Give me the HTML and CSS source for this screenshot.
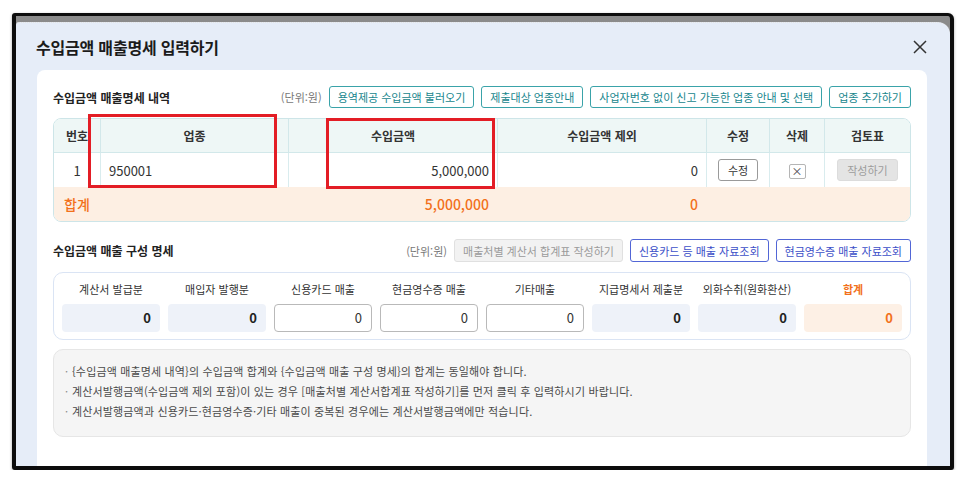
FILE: index.html
```html
<!DOCTYPE html>
<html lang="ko">
<head>
<meta charset="utf-8">
<title>수입금액 매출명세 입력하기</title>
<link rel="stylesheet" href="styles.css">
</head>
<body>
<div class="frame">
  <div class="modal">
    <header class="modal-head">
      <h1 class="modal-title">수입금액 매출명세 입력하기</h1>
      <button class="close" type="button" aria-label="닫기">
        <svg width="14" height="14" viewBox="0 0 14 14"><path d="M1 1L13 13M13 1L1 13" stroke="#333" stroke-width="1.5" fill="none"/></svg>
      </button>
    </header>

    <div class="panel">
      <section class="sec">
        <div class="sec-head">
          <h2 class="sec-title">수입금액 매출명세 내역</h2>
          <div class="tools">
            <span class="unit">(단위:원)</span>
            <button class="btn btn-teal" type="button">용역제공 수입금액 불러오기</button>
            <button class="btn btn-teal" type="button">제출대상 업종안내</button>
            <button class="btn btn-teal" type="button">사업자번호 없이 신고 가능한 업종 안내 및 선택</button>
            <button class="btn btn-teal" type="button">업종 추가하기</button>
          </div>
        </div>

        <div class="table-wrap">
          <table class="grid">
            <colgroup>
              <col class="c-no"><col class="c-type"><col class="c-amt"><col class="c-ex"><col class="c-edit"><col class="c-del"><col class="c-rev">
            </colgroup>
            <thead>
              <tr><th>번호</th><th>업종</th><th>수입금액</th><th>수입금액 제외</th><th>수정</th><th>삭제</th><th>검토표</th></tr>
            </thead>
            <tbody>
              <tr class="row">
                <td class="ctr">1</td>
                <td class="lft">950001</td>
                <td class="num">5,000,000</td>
                <td class="num">0</td>
                <td class="ctr"><button class="mini" type="button">수정</button></td>
                <td class="ctr"><button class="del" type="button">×</button></td>
                <td class="ctr"><button class="mini mini-off" type="button">작성하기</button></td>
              </tr>
              <tr class="sum">
                <td colspan="2" class="lft sum-label">합계</td>
                <td class="num">5,000,000</td>
                <td class="num">0</td>
                <td colspan="3"></td>
              </tr>
            </tbody>
          </table>
          <div class="mark mark-type"></div>
          <div class="mark mark-amt"></div>
        </div>
      </section>

      <section class="sec sec-2">
        <div class="sec-head">
          <h2 class="sec-title">수입금액 매출 구성 명세</h2>
          <div class="tools">
            <span class="unit">(단위:원)</span>
            <button class="btn btn-gray" type="button">매출처별 계산서 합계표 작성하기</button>
            <button class="btn btn-blue" type="button">신용카드 등 매출 자료조회</button>
            <button class="btn btn-blue" type="button">현금영수증 매출 자료조회</button>
          </div>
        </div>

        <div class="mix">
          <div class="cell"><span class="cell-label">계산서 발급분</span><span class="field field-ro">0</span></div>
          <div class="cell"><span class="cell-label">매입자 발행분</span><span class="field field-ro">0</span></div>
          <div class="cell"><span class="cell-label">신용카드 매출</span><span class="field field-in">0</span></div>
          <div class="cell"><span class="cell-label">현금영수증 매출</span><span class="field field-in">0</span></div>
          <div class="cell"><span class="cell-label">기타매출</span><span class="field field-in">0</span></div>
          <div class="cell"><span class="cell-label">지급명세서 제출분</span><span class="field field-ro">0</span></div>
          <div class="cell"><span class="cell-label">외화수취(원화환산)</span><span class="field field-ro">0</span></div>
          <div class="cell"><span class="cell-label cell-label-sum">합계</span><span class="field field-sum">0</span></div>
        </div>

        <ul class="notes">
          <li>{수입금액 매출명세 내역}의 수입금액 합계와 {수입금액 매출 구성 명세}의 합계는 동일해야 합니다.</li>
          <li>계산서발행금액(수입금액 제외 포함)이 있는 경우 [매출처별 계산서합계표 작성하기]를 먼저 클릭 후 입력하시기 바랍니다.</li>
          <li>계산서발행금액과 신용카드·현금영수증·기타 매출이 중복된 경우에는 계산서발행금액에만 적습니다.</li>
        </ul>
      </section>
    </div>
  </div>
</div>
</body>
</html>
```

FILE: styles.css
```css
* { box-sizing: border-box; }

html, body {
  margin: 0;
  background: #ffffff;
}

body {
  font-family: "Noto Sans CJK KR", "Noto Sans", sans-serif;
  color: #222;
}

button {
  font-family: inherit;
  cursor: pointer;
}

/* outer window frame */
.frame {
  margin: 13px 0 0 12px;
  width: 942px;
  height: 457px;
  border: 4px solid #0d0d0d;
  border-top-width: 3px;
  background: #8b8b8b;
  border-radius: 3px 6px 3px 3px;
  box-shadow: 0 1px 3px rgba(0, 0, 0, 0.35);
  overflow: hidden;
}

.modal {
  margin-top: 6px;
  height: calc(100% - 6px);
  background: #e6edf8;
  border-top: 1px dotted #e4e4e4;
  border-radius: 3px 12px 0 0;
  display: flex;
  flex-direction: column;
  overflow: hidden;
}

.modal-head {
  height: 47px;
  flex: none;
  display: flex;
  align-items: center;
  justify-content: space-between;
  padding: 0 22px 0 20px;
}

.modal-title {
  margin: 0;
  font-size: 16px;
  font-weight: 700;
  color: #1b1b1b;
  letter-spacing: -0.2px;
}

.close {
  width: 16px;
  height: 16px;
  padding: 0;
  border: 0;
  background: none;
  display: flex;
  align-items: center;
  justify-content: center;
}

.panel {
  flex: 1;
  margin: 0 23px 0 21px;
  background: #ffffff;
  border-radius: 8px 8px 0 0;
  padding: 16px 16px 0;
}

/* section headers */
.sec-head {
  height: 22px;
  display: flex;
  align-items: center;
  justify-content: space-between;
  margin-bottom: 10px;
}

.sec-title {
  margin: 0;
  font-size: 12px;
  font-weight: 700;
  color: #222;
}

.tools {
  display: flex;
  align-items: center;
  gap: 7px;
}

.unit {
  font-size: 11px;
  color: #777;
}

.btn {
  height: 22px;
  padding: 0 8px;
  font-size: 11px;
  border-radius: 3px;
  background: #fff;
  white-space: nowrap;
}

.btn-teal {
  border: 1px solid #3aa3a9;
  color: #17868d;
}

.btn-blue {
  height: 23px;
  border: 1px solid #5266d6;
  color: #3c4fc8;
}

.btn-gray {
  height: 23px;
  border: 1px solid #e0e0e0;
  background: #f2f2f2;
  color: #9a9a9a;
}

/* sales detail table */
.table-wrap {
  position: relative;
}

.grid {
  width: 100%;
  border-collapse: separate;
  border-spacing: 0;
  border: 1px solid #cde5e8;
  border-radius: 8px;
  overflow: hidden;
  table-layout: fixed;
  font-size: 13px;
}

.c-no { width: 46px; }
.c-type { width: 188px; }
.c-amt { width: 209px; }
.c-ex { width: 209px; }
.c-edit { width: 63px; }
.c-del { width: 55px; }
.c-rev { width: auto; }

.grid th {
  height: 34px;
  background: #eef7f6;
  font-size: 12px;
  font-weight: 700;
  color: #333;
  border-bottom: 1px solid #d2e8ea;
  border-left: 1px solid #d2e8ea;
}

.grid th:first-child,
.grid .row td:first-child {
  border-left: 0;
}

.grid .row td {
  height: 34px;
  border-left: 1px solid #d9ecee;
  color: #333;
}

.ctr { text-align: center; }
.lft { text-align: left; padding-left: 8px; }
.num { text-align: right; padding-right: 8px; }

.sum td {
  height: 34px;
  background: #fdefe3;
  color: #f2711c;
  font-size: 14px;
  font-weight: 500;
}

.sum-label {
  padding-left: 10px;
}

.mini {
  height: 22px;
  padding: 0 9px;
  font-size: 11px;
  color: #333;
  background: #fff;
  border: 1px solid #9a9a9a;
  border-radius: 3px;
}

.mini-off {
  background: #e4e4e4;
  border-color: #dcdcdc;
  color: #9c9c9c;
}

.del {
  width: 17px;
  height: 15px;
  padding: 0;
  font-size: 11px;
  line-height: 1;
  color: #444;
  background: #fff;
  border: 1px solid #b5b5b5;
  border-radius: 2px;
}

/* red highlight boxes over the table */
.mark {
  position: absolute;
  border: 3px solid #e31d25;
  pointer-events: none;
}

.mark-type {
  left: 35px;
  top: -4px;
  width: 189px;
  height: 74px;
}

.mark-amt {
  left: 273px;
  top: 0;
  width: 169px;
  height: 71px;
}

/* composition section */
.sec-2 {
  margin-top: 17px;
}

.sec-2 .sec-head {
  height: 23px;
}

.mix {
  display: grid;
  grid-template-columns: repeat(8, 1fr);
  gap: 6px 8px;
  padding: 7px 8px;
  border: 1px solid #dae4f4;
  border-radius: 10px;
}

.cell {
  display: flex;
  flex-direction: column;
  gap: 6px;
}

.cell-label {
  height: 18px;
  line-height: 18px;
  text-align: center;
  font-size: 11px;
  color: #333;
  white-space: nowrap;
}

.cell-label-sum {
  color: #f2711c;
  font-weight: 700;
}

.field {
  height: 28px;
  line-height: 28px;
  padding: 0 9px;
  text-align: right;
  font-size: 13px;
  border-radius: 4px;
}

.field-ro {
  background: #eef2f9;
  font-weight: 700;
  color: #222;
}

.field-in {
  border: 1px solid #b9b9b9;
  line-height: 26px;
  background: #fff;
  color: #333;
}

.field-sum {
  background: #fdf0e5;
  color: #f2711c;
  font-weight: 700;
}

/* guidance notes */
.notes {
  list-style: none;
  margin: 9px 0 0;
  padding: 11px 10px 15px 11px;
  background: #f5f5f5;
  border: 1px solid #e6e6e6;
  border-radius: 10px;
  font-size: 11px;
  line-height: 20px;
  color: #4a4a4a;
  letter-spacing: 0.15px;
}

.notes li::before {
  content: "·";
  display: inline-block;
  width: 7px;
  color: #888;
}
```
